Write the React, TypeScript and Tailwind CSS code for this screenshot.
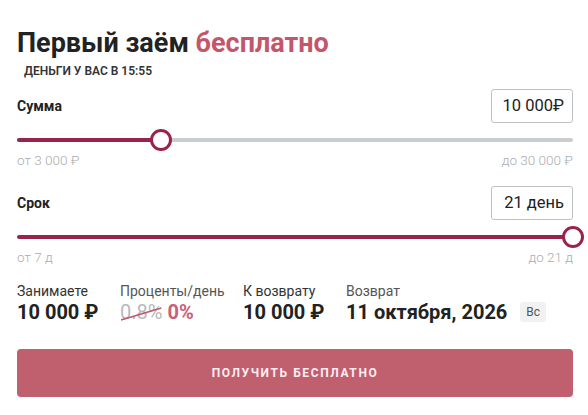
import React from "react";

const font = { fontFamily: "Roboto, 'Noto Sans', Arial, sans-serif" };

function Slider({ percent }: { percent: number }) {
  return (
    <div className="relative flex h-[22px] items-center">
      <div className="flex h-[4px] w-full overflow-hidden rounded-full bg-[#c9cdd0]">
        <div className="h-full bg-[#982449]" style={{ width: `${percent}%` }} />
      </div>
      <div
        className="absolute top-1/2 h-[22px] w-[22px] -translate-x-1/2 -translate-y-1/2 rounded-full border-[3px] border-[#982449] bg-white"
        style={{ left: `${percent}%` }}
      />
    </div>
  );
}

function Field({
  label,
  value,
  percent,
  min,
  max,
}: {
  label: string;
  value: string;
  percent: number;
  min: string;
  max: string;
}) {
  return (
    <div>
      <div className="flex h-[34px] items-center justify-between">
        <span className="text-[14px] font-bold text-[#222]">{label}</span>
        <div className="flex h-[34px] w-[82px] items-center justify-end rounded-[3px] border border-[#bfc2c5] pr-[8px] text-[16.5px] text-[#222]">
          {value}
        </div>
      </div>
      <div className="mt-[6px]">
        <Slider percent={percent} />
      </div>
      <div className="mt-[1px] flex justify-between text-[13.5px] font-light leading-[16px] text-[#a9adb1]">
        <span>{min}</span>
        <span>{max}</span>
      </div>
    </div>
  );
}

export default function App() {
  return (
    <div className="min-h-screen bg-white" style={font}>
      <div className="ml-[17px] w-[556px] pt-[26px]">
        <h1 className="text-[27px] font-bold leading-[34px] text-[#222]">
          Первый заём <span className="text-[#c4566c]">бесплатно</span>
        </h1>
        <div className="mt-[4px] pl-[7px] text-[12px] font-semibold uppercase leading-[14px] text-[#333]">
          Деньги у вас в 15:55
        </div>

        <div className="mt-[11px]">
          <Field label="Сумма" value="10 000₽" percent={25.93} min="от 3 000 ₽" max="до 30 000 ₽" />
        </div>
        <div className="mt-[18px]">
          <Field label="Срок" value="21 день" percent={100} min="от 7 д" max="до 21 д" />
        </div>

        <div className="mt-[17px] flex">
          <div className="w-[103px]">
            <div className="text-[14px] leading-[18px] text-[#333]">Занимаете</div>
            <div className="text-[20px] font-bold leading-[24px] text-[#222]">10 000 ₽</div>
          </div>
          <div className="w-[123px]">
            <div className="text-[14px] leading-[18px] text-[#555]">Проценты/день</div>
            <div className="flex text-[20px] leading-[24px]">
              <span className="relative text-[#b5b9bc]">
                0.8%
                <svg className="absolute inset-0 h-full w-full" viewBox="0 0 40 24" preserveAspectRatio="none">
                  <line x1="1" y1="20" x2="39" y2="8" stroke="#c4566c" strokeWidth="1.6" />
                </svg>
              </span>
              <span className="ml-[5px] font-bold text-[#c9607a]">0%</span>
            </div>
          </div>
          <div className="w-[103px]">
            <div className="text-[14px] leading-[18px] text-[#333]">К возврату</div>
            <div className="text-[20px] font-bold leading-[24px] text-[#222]">10 000 ₽</div>
          </div>
          <div className="flex-1">
            <div className="text-[14px] leading-[18px] text-[#555]">Возврат</div>
            <div className="flex items-center">
              <span className="text-[20px] font-bold leading-[24px] text-[#222]">11 октября, 2026</span>
              <span className="ml-[13px] rounded-[3px] bg-[#f1f1f1] px-[6px] py-[2px] text-[12px] leading-[16px] text-[#555]">
                Вс
              </span>
            </div>
          </div>
        </div>

        <button className="mt-[25px] flex h-[48px] w-full items-center justify-center rounded-[4px] bg-[#c0606e] text-[12px] font-bold uppercase tracking-[1.6px] text-[#fdecef]">
          Получить бесплатно
        </button>
      </div>
    </div>
  );
}
